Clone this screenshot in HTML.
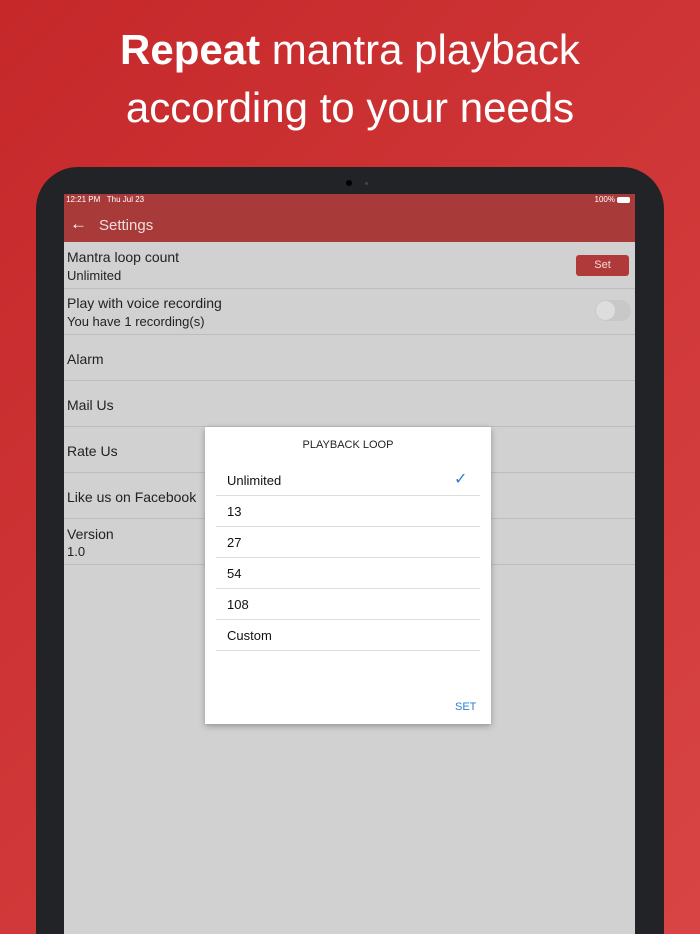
<!DOCTYPE html><html><head><style>
html,body{margin:0;width:700px;height:934px;overflow:hidden}
body{background:linear-gradient(135deg,#c6282a,#d84444);font-family:"Liberation Sans",sans-serif;position:relative}
.h{position:absolute;top:21px;width:700px;text-align:center;color:#fff;font-size:42px;line-height:58px}
.dev{position:absolute;left:36px;top:167px;width:628px;height:767px;background:#222326;border-radius:42px 42px 0 0}
.scr{position:absolute;left:64px;top:194px;width:571px;height:740px;background:#d1d1d1;overflow:hidden}
.bar{height:48px;background:#a83b3a;color:#fff}
.row{position:absolute;left:0;width:571px;border-bottom:1px solid #bdbdbd;color:#222;font-size:14px}
.row div{position:absolute;left:3px}
.dlg{position:absolute;left:205px;top:427px;width:286px;height:297px;background:#fff;box-shadow:0 2px 6px rgba(0,0,0,.3)}
.it{position:absolute;left:11px;width:264px;border-bottom:1px solid #ddd;height:31px;font-size:13px;color:#111}
.it span{position:absolute;left:11px;top:9px}
</style></head><body>
<div class="h"><b>Repeat</b> mantra playback<br>according to your needs</div>
<div class="dev"><div style="position:absolute;left:310px;top:13px;width:6px;height:6px;border-radius:3px;background:#000"></div><div style="position:absolute;left:329px;top:15px;width:3px;height:3px;border-radius:2px;background:#444"></div></div>
<div class="scr">
<div class="bar"><div style="position:absolute;left:2px;top:1px;font-size:8px">12:21 PM&nbsp;&nbsp; Thu Jul 23</div>
<div style="position:absolute;right:20px;top:1px;font-size:8px">100%</div>
<div style="position:absolute;right:5px;top:3px;width:13px;height:6px;background:#fff;border-radius:2px"></div>
<div style="position:absolute;left:6px;top:20px;font-size:17px;font-weight:bold">&#8592;</div>
<div style="position:absolute;left:35px;top:23px;font-size:15px;color:#f1dede">Settings</div></div>
<div class="row" style="top:48px;height:46px"><div style="top:7px">Mantra loop count</div><div style="top:26px;font-size:13px">Unlimited</div>
<span style="position:absolute;left:512px;top:13px;width:53px;height:21px;background:#b03a3a;border-radius:3px;color:#f2dcdc;font-size:11px;text-align:center;line-height:21px">Set</span></div>
<div class="row" style="top:95px;height:45px"><div style="top:6px">Play with voice recording</div><div style="top:25px;font-size:13px">You have 1 recording(s)</div>
<span style="position:absolute;left:531px;top:11px;width:36px;height:21px;border-radius:11px;background:#c8c8c8"></span><span style="position:absolute;left:532px;top:12px;width:19px;height:19px;border-radius:10px;background:#ddd"></span></div>
<div class="row" style="top:141px;height:45px"><div style="top:16px">Alarm</div></div>
<div class="row" style="top:187px;height:45px"><div style="top:16px">Mail Us</div></div>
<div class="row" style="top:233px;height:45px"><div style="top:16px">Rate Us</div></div>
<div class="row" style="top:279px;height:45px"><div style="top:16px">Like us on Facebook</div></div>
<div class="row" style="top:325px;height:45px"><div style="top:7px">Version</div><div style="top:25px;font-size:13px">1.0</div></div>
</div>
<div class="dlg">
<div style="position:absolute;top:12px;width:286px;text-align:center;font-size:11px;color:#222">PLAYBACK LOOP</div>
<div class="it" style="top:37px"><span>Unlimited</span><span style="left:238px;top:5px;color:#2a7fd4;font-size:16px">&#10003;</span></div>
<div class="it" style="top:68px"><span>13</span></div>
<div class="it" style="top:99px"><span>27</span></div>
<div class="it" style="top:130px"><span>54</span></div>
<div class="it" style="top:161px"><span>108</span></div>
<div class="it" style="top:192px"><span>Custom</span></div>
<div style="position:absolute;left:250px;top:274px;font-size:11px;color:#2a7fd4">SET</div>
</div>
</body></html>
